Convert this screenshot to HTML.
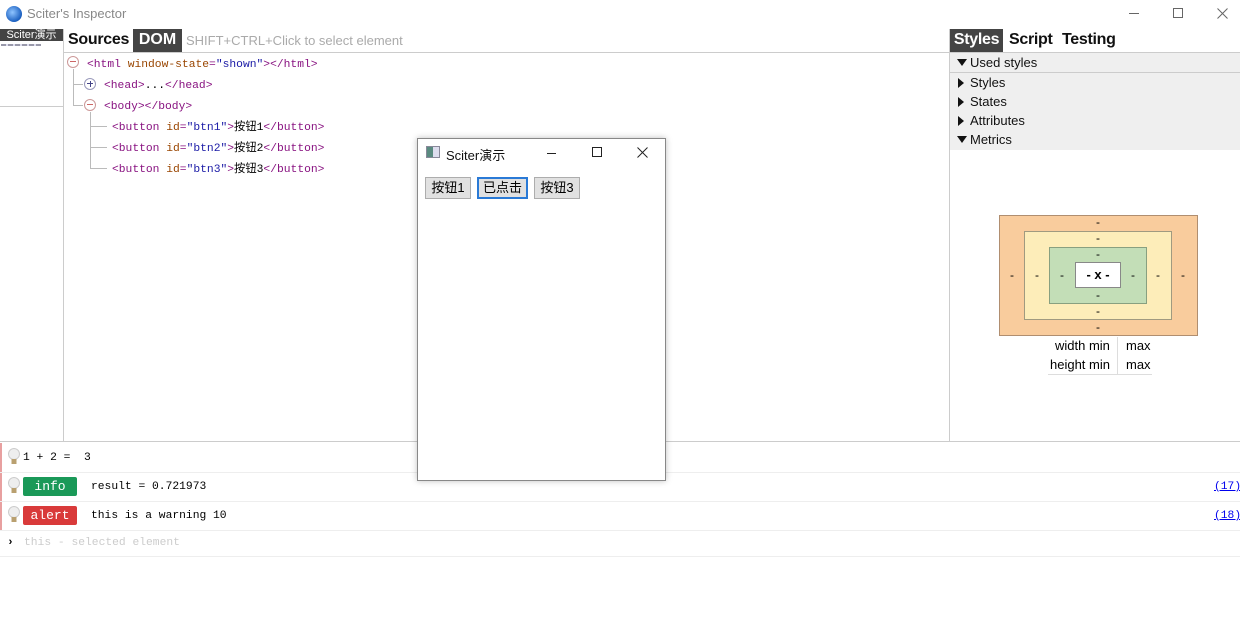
<!DOCTYPE html>
<html><head><meta charset="utf-8"><style>
*{margin:0;padding:0;box-sizing:border-box}
body{width:1240px;height:628px;background:#fff;position:relative;overflow:hidden;font-family:"Liberation Sans","Noto Sans CJK SC",sans-serif;}
.a{position:absolute}
.mono{font-family:"Liberation Mono","Noto Sans CJK SC",monospace;font-size:11.3px;white-space:pre;line-height:14px}
.tg{color:#881280}.at{color:#994500}.av{color:#1a1aa6}
.row{position:absolute;left:0;white-space:pre}
.sec{position:absolute;left:950px;width:290px;height:19px;font-size:13px;padding-left:20px;line-height:19px;color:#111}
.sec:before{content:"";position:absolute;left:7px;top:5px}
.open:before{border-left:5px solid transparent;border-right:5px solid transparent;border-top:7px solid #111;top:6px}
.closed:before{border-top:5px solid transparent;border-bottom:5px solid transparent;border-left:6px solid #111;left:8px}
.btn{position:absolute;top:177px;height:22px;border:1px solid #adadad;background:#e1e1e1;font-size:13px;line-height:20px;text-align:center}
.tab{position:absolute;top:31px;font-size:16px;font-weight:bold;color:#111;letter-spacing:-0.3px}
</style></head><body>
<div class="a" style="left:6px;top:6px;width:16px;height:16px;border-radius:50%;background:radial-gradient(circle at 40% 40%,#8fc4ff,#1a5fc0 70%,#0b3a80)"></div>
<div class="a" style="left:27px;top:6px;font-size:13px;color:#888">Sciter's Inspector</div>
<div class="a" style="left:1129px;top:13px;width:10px;height:1px;background:#666"></div>
<div class="a" style="left:1173px;top:8px;width:10px;height:10px;border:1px solid #666"></div>
<svg class="a" style="left:1217px;top:8px" width="11" height="11"><path d="M0.5 0.5L10.5 10.5M10.5 0.5L0.5 10.5" stroke="#666" stroke-width="1"/></svg>

<div class="a" style="left:0;top:29px;width:63px;height:12px;background:#444;color:#fff;font-size:11px;line-height:12px;text-align:center">Sciter演示</div>
<div class="a" style="left:1px;top:44px;width:40px;height:2px;background:repeating-linear-gradient(90deg,#99a 0 5px,#dde 5px 7px)"></div>
<div class="a" style="left:0;top:106px;width:63px;height:1px;background:#ccc"></div>
<div class="a" style="left:63px;top:29px;width:1px;height:412px;background:#ccc"></div>

<div class="tab" style="left:68px">Sources</div>
<div class="a" style="left:133px;top:29px;width:49px;height:23px;background:#444;color:#fff;font-size:16px;font-weight:bold;text-align:center;line-height:22px">DOM</div>
<div class="a" style="left:186px;top:33px;font-size:13px;color:#aaa">SHIFT+CTRL+Click to select element</div>
<div class="a" style="left:64px;top:52px;width:885px;height:1px;background:#ccc"></div>

<div class="a" style="left:67px;top:56px;width:12px;height:12px;border:1px solid #c99;border-radius:50%"></div>
<div class="a" style="left:70px;top:61px;width:6px;height:1px;background:#c66"></div>
<div class="row mono" style="left:87px;top:58px"><span class="tg">&lt;html </span><span class="at">window-state</span><span class="tg">=</span><span class="av">"shown"</span><span class="tg">&gt;&lt;/html&gt;</span></div>
<div class="a" style="left:73px;top:69px;width:1px;height:36px;background:#bbb"></div>
<div class="a" style="left:73px;top:84px;width:10px;height:1px;background:#bbb"></div>
<div class="a" style="left:73px;top:105px;width:10px;height:1px;background:#bbb"></div>
<div class="a" style="left:84px;top:78px;width:12px;height:12px;border:1px solid #99b;border-radius:50%"></div>
<div class="a" style="left:87px;top:83px;width:6px;height:1px;background:#448"></div>
<div class="a" style="left:89.5px;top:81px;width:1px;height:6px;background:#448"></div>
<div class="row mono" style="left:104px;top:79px"><span class="tg">&lt;head&gt;</span>...<span class="tg">&lt;/head&gt;</span></div>
<div class="a" style="left:84px;top:99px;width:12px;height:12px;border:1px solid #c99;border-radius:50%"></div>
<div class="a" style="left:87px;top:104px;width:6px;height:1px;background:#c66"></div>
<div class="row mono" style="left:104px;top:100px"><span class="tg">&lt;body&gt;&lt;/body&gt;</span></div>
<div class="a" style="left:90px;top:112px;width:1px;height:57px;background:#bbb"></div>
<div class="a" style="left:90px;top:126px;width:17px;height:1px;background:#bbb"></div>
<div class="a" style="left:90px;top:147px;width:17px;height:1px;background:#bbb"></div>
<div class="a" style="left:90px;top:168px;width:17px;height:1px;background:#bbb"></div>
<div class="row mono" style="left:112px;top:121px"><span class="tg">&lt;button </span><span class="at">id</span><span class="tg">=</span><span class="av">"btn1"</span><span class="tg">&gt;</span>按钮1<span class="tg">&lt;/button&gt;</span></div>
<div class="row mono" style="left:112px;top:142px"><span class="tg">&lt;button </span><span class="at">id</span><span class="tg">=</span><span class="av">"btn2"</span><span class="tg">&gt;</span>按钮2<span class="tg">&lt;/button&gt;</span></div>
<div class="row mono" style="left:112px;top:163px"><span class="tg">&lt;button </span><span class="at">id</span><span class="tg">=</span><span class="av">"btn3"</span><span class="tg">&gt;</span>按钮3<span class="tg">&lt;/button&gt;</span></div>

<div class="a" style="left:949px;top:29px;width:1px;height:412px;background:#ccc"></div>
<div class="a" style="left:950px;top:29px;width:53px;height:23px;background:#444;color:#fff;font-size:16px;font-weight:bold;text-align:center;line-height:22px;letter-spacing:-0.3px">Styles</div>
<div class="tab" style="left:1009px">Script</div>
<div class="tab" style="left:1062px">Testing</div>
<div class="a" style="left:950px;top:52px;width:290px;height:1px;background:#ccc"></div>
<div class="sec open" style="top:53px;background:#efefef;border-bottom:1px solid #ccc;height:20px">Used styles</div>
<div class="a" style="left:950px;top:73px;width:290px;height:77px;background:#efefef"></div>
<div class="sec closed" style="top:73px">Styles</div>
<div class="sec closed" style="top:92px">States</div>
<div class="sec closed" style="top:111px">Attributes</div>
<div class="sec open" style="top:130px">Metrics</div>

<div class="a" style="left:999px;top:215px;width:199px;height:121px;background:#f9cc9d;border:1px solid #b08e70"></div>
<div class="a" style="left:1024px;top:231px;width:148px;height:89px;background:#fdedb9;border:1px solid #a09a80"></div>
<div class="a" style="left:1049px;top:247px;width:98px;height:57px;background:#c3deb7;border:1px solid #88a080"></div>
<div class="a" style="left:1075px;top:262px;width:46px;height:26px;background:#fff;border:1px solid #888;font-size:13px;text-align:center;line-height:24px;font-weight:bold">- x -</div>
<div class="a" style="left:1096px;top:215px;font-size:12px">-</div>
<div class="a" style="left:1096px;top:231px;font-size:12px">-</div>
<div class="a" style="left:1096px;top:247px;font-size:12px">-</div>
<div class="a" style="left:1096px;top:288px;font-size:12px">-</div>
<div class="a" style="left:1096px;top:304px;font-size:12px">-</div>
<div class="a" style="left:1096px;top:320px;font-size:12px">-</div>
<div class="a" style="left:1010px;top:268px;font-size:12px">-</div>
<div class="a" style="left:1035px;top:268px;font-size:12px">-</div>
<div class="a" style="left:1060px;top:268px;font-size:12px">-</div>
<div class="a" style="left:1131px;top:268px;font-size:12px">-</div>
<div class="a" style="left:1156px;top:268px;font-size:12px">-</div>
<div class="a" style="left:1181px;top:268px;font-size:12px">-</div>
<div class="a" style="left:1055px;top:338px;font-size:13px">width min</div>
<div class="a" style="left:1050px;top:357px;font-size:13px">height min</div>
<div class="a" style="left:1117px;top:337px;width:1px;height:37px;background:#ddd"></div>
<div class="a" style="left:1126px;top:338px;font-size:13px">max</div>
<div class="a" style="left:1126px;top:357px;font-size:13px">max</div>
<div class="a" style="left:1048px;top:374px;width:104px;height:1px;background:#ddd"></div>

<div class="a" style="left:0;top:441px;width:1240px;height:1px;background:#ccc"></div>
<div class="a" style="left:0;top:443px;width:2px;height:87px;background:#e8a0a0"></div>
<div class="a" style="left:0;top:472px;width:1240px;height:1px;background:#eee"></div>
<div class="a" style="left:0;top:501px;width:1240px;height:1px;background:#eee"></div>
<div class="a" style="left:0;top:530px;width:1240px;height:1px;background:#eee"></div>
<div class="a" style="left:0;top:556px;width:1240px;height:1px;background:#eee"></div>
<svg class="a" style="left:7px;top:448px" width="14" height="18"><circle cx="7" cy="6" r="5.5" fill="#eee" stroke="#ccc"/><rect x="4.5" y="11" width="5" height="5" fill="#b9a070"/></svg>
<svg class="a" style="left:7px;top:477px" width="14" height="18"><circle cx="7" cy="6" r="5.5" fill="#eee" stroke="#ccc"/><rect x="4.5" y="11" width="5" height="5" fill="#b9a070"/></svg>
<svg class="a" style="left:7px;top:506px" width="14" height="18"><circle cx="7" cy="6" r="5.5" fill="#eee" stroke="#ccc"/><rect x="4.5" y="11" width="5" height="5" fill="#b9a070"/></svg>
<div class="row mono" style="left:23px;top:451px">1 + 2 =  3</div>
<div class="a mono" style="left:23px;top:477px;width:54px;height:19px;background:#1a9958;color:#fff;text-align:center;line-height:19px;font-size:13px;border-radius:2px">info</div>
<div class="row mono" style="left:91px;top:480px">result = 0.721973</div>
<div class="a mono" style="left:23px;top:506px;width:54px;height:19px;background:#d93a3a;color:#fff;text-align:center;line-height:19px;font-size:13px;border-radius:2px">alert</div>
<div class="row mono" style="left:91px;top:509px">this is a warning 10</div>
<div class="row mono" style="left:1214px;top:480px;color:#00e;text-decoration:underline">(17)</div>
<div class="row mono" style="left:1214px;top:509px;color:#00e;text-decoration:underline">(18)</div>
<div class="row mono" style="left:7px;top:536px;font-weight:bold">›</div>
<div class="row mono" style="left:24px;top:536px;color:#ccc">this - selected element</div>

<div class="a" style="left:417px;top:138px;width:249px;height:343px;background:#fff;border:1px solid #888;box-shadow:0 0 6px rgba(0,0,0,.25)"></div>
<div class="a" style="left:426px;top:146px;width:14px;height:12px;border:1px solid #889;background:linear-gradient(90deg,#5a8a80 0 6px,#dde 6px)"></div>
<div class="a" style="left:446px;top:145px;font-size:13px;color:#111">Sciter演示</div>
<div class="a" style="left:547px;top:153px;width:9px;height:1px;background:#222"></div>
<div class="a" style="left:592px;top:147px;width:10px;height:10px;border:1px solid #222"></div>
<svg class="a" style="left:637px;top:147px" width="11" height="11"><path d="M0.5 0.5L10.5 10.5M10.5 0.5L0.5 10.5" stroke="#222" stroke-width="1"/></svg>
<div class="btn" style="left:425px;width:46px">按钮1</div>
<div class="btn" style="left:477px;width:51px;border:2px solid #2a7ad6;line-height:18px">已点击</div>
<div class="btn" style="left:534px;width:46px">按钮3</div>
</body></html>
